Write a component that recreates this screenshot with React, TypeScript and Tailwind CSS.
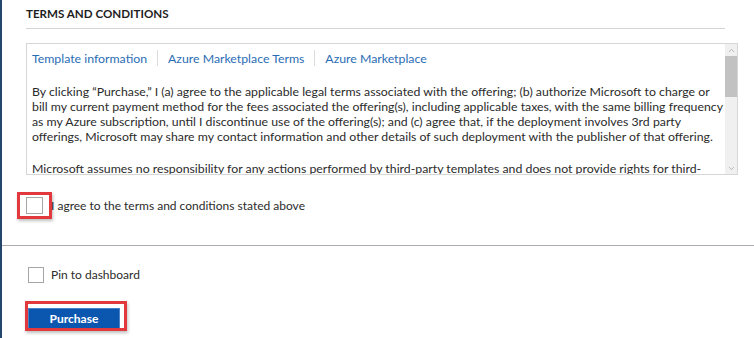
import { ChevronUp, ChevronDown } from "lucide-react"

const lines1 = [
  "By clicking “Purchase,” I (a) agree to the applicable legal terms associated with the offering; (b) authorize Microsoft to charge or",
  "bill my current payment method for the fees associated the offering(s), including applicable taxes, with the same billing frequency",
  "as my Azure subscription, until I discontinue use of the offering(s); and (c) agree that, if the deployment involves 3rd party",
  "offerings, Microsoft may share my contact information and other details of such deployment with the publisher of that offering.",
]

const lines2 = [
  "Microsoft assumes no responsibility for any actions performed by third-party templates and does not provide rights for third-",
  "party products or services. See the Azure Marketplace Terms for additional details.",
]

export default function App() {
  return (
    <div className="w-[754px] h-[338px] bg-white flex overflow-hidden font-['Segoe_UI','Lato',sans-serif] text-[#2b2b2b]">
      <div className="w-[2px] bg-[#24466b]" />
      <div className="flex-1 flex flex-col">
        <div className="pl-[24px]">
          <h1 className="pt-[6px] text-[11.6px] leading-[16px] font-bold text-[#1e1e1e]">TERMS AND CONDITIONS</h1>
          <div className="mt-[6px] w-[699px] h-px bg-[#d4d4d4]" />

          <div className="mt-[14px] w-[712px] h-[132px] border border-[#d6d6d6] flex">
            <div className="flex-1 overflow-hidden pl-[5px] pt-[6px] text-[12.3px] leading-[15px]">
              <div className="flex items-center h-[16px] text-[#2a6db5]">
                <span>Template information</span>
                <span className="mx-[10px] w-px h-[16px] bg-[#dcdcdc]" />
                <span>Azure Marketplace Terms</span>
                <span className="mx-[10px] w-px h-[16px] bg-[#dcdcdc]" />
                <span>Azure Marketplace</span>
              </div>
              <p className="mt-[18px]">
                {lines1.map((l) => (
                  <span key={l} className="block whitespace-nowrap">{l}</span>
                ))}
              </p>
              <p className="mt-[17px]">
                {lines2.map((l) => (
                  <span key={l} className="block whitespace-nowrap">{l}</span>
                ))}
              </p>
            </div>
            <div className="w-[12px] bg-[#f0f0f0] flex flex-col items-center">
              <div className="h-[12px] flex items-center justify-center text-[#a3a3a3]">
                <ChevronUp size={9} strokeWidth={2} />
              </div>
              <div className="w-full h-[41px] bg-[#c2c2c2]" />
              <div className="flex-1" />
              <div className="h-[12px] flex items-center justify-center text-[#a3a3a3]">
                <ChevronDown size={9} strokeWidth={2} />
              </div>
            </div>
          </div>

          <div className="relative mt-[22px] flex items-center h-[17px] text-[12px]">
            <span className="w-[17px] h-[17px] border border-[#a6a6a6] bg-white" />
            <span className="ml-[8px]">I agree to the terms and conditions stated above</span>
            <div className="absolute left-[-9px] top-[-5px] w-[35px] h-[27px] border-[3px] border-[#e2393f] shadow-[1px_2px_3px_rgba(0,0,0,0.25)]" />
          </div>
        </div>

        <div className="mt-[31px] h-px bg-[#a9adb3]" />

        <div className="pl-[26px]">
          <div className="mt-[21px] flex items-center h-[16px] text-[12px]">
            <span className="w-[16px] h-[16px] border border-[#a6a6a6] bg-white" />
            <span className="ml-[7px]">Pin to dashboard</span>
          </div>

          <div className="relative mt-[22px] w-[92px]">
            <button className="w-[92px] h-[22px] bg-[#0b57b0] border border-[#4a82c6] text-white text-[12px] font-bold leading-none">
              Purchase
            </button>
            <div className="absolute left-[-3px] top-[-4px] w-[102px] h-[30px] border-[3px] border-[#e2393f] shadow-[1px_2px_3px_rgba(0,0,0,0.25)]" />
          </div>
        </div>
      </div>
    </div>
  )
}
